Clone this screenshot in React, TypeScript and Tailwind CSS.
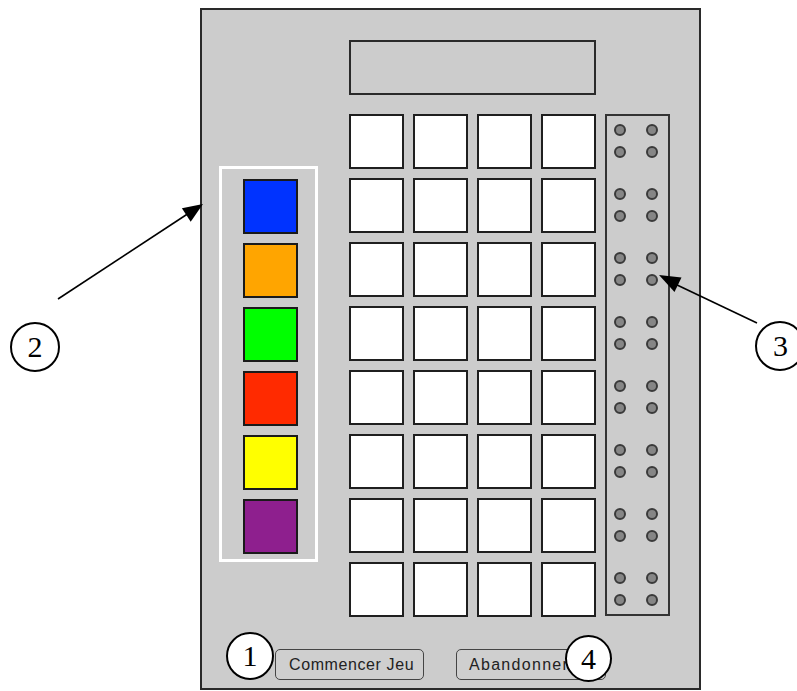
import React from "react";

const colors = ["#0033ff", "#ffa500", "#00ff00", "#ff2a00", "#ffff00", "#8e1f8e"];

function Callout({ n, className }: { n: string; className: string }) {
  return (
    <div
      className={`absolute rounded-full bg-white border-2 border-black flex items-center justify-center text-[30px] leading-none text-black ${className}`}
      style={{ fontFamily: '"Liberation Serif", "Times New Roman", serif' }}
    >
      {n}
    </div>
  );
}

export default function App() {
  return (
    <div className="relative w-[797px] h-[691px] bg-white overflow-hidden pt-[8px] pl-[200px]">
      <div className="w-[501px] h-[682px] border-2 border-[#2a2a2a] bg-[#cccccc] flex flex-col">
        {/* display box */}
        <div className="ml-[147px] mt-[30px] w-[247px] h-[55px] border-2 border-[#2a2a2a]" />
        <div className="flex items-start mt-[19px]">
          {/* palette */}
          <div className="ml-[17px] mt-[52px] w-[99px] h-[396px] border-[3px] border-white flex flex-col gap-[9px] pl-[21px] pt-[10px]">
            {colors.map((c) => (
              <div key={c} className="w-[55px] h-[55px] border-2 border-[#1a1a1a]" style={{ backgroundColor: c }} />
            ))}
          </div>
          {/* grid */}
          <div className="ml-[31px] grid grid-cols-4 gap-[9px]">
            {Array.from({ length: 32 }).map((_, i) => (
              <div key={i} className="w-[55px] h-[55px] bg-white border-2 border-[#1f1f1f]" />
            ))}
          </div>
          {/* pegs */}
          <div className="ml-[9px] w-[65px] h-[502px] border-2 border-[#333] flex flex-col pt-[8px] pl-[7px]">
            {Array.from({ length: 8 }).map((_, r) => (
              <div key={r} className="h-[64px] shrink-0">
                <div className="grid grid-cols-2 w-fit gap-x-[20px] gap-y-[10px]">
                  {Array.from({ length: 4 }).map((_, j) => (
                    <div key={j} className="w-[12px] h-[12px] rounded-full bg-[#868686] border-2 border-[#3a3a3a]" />
                  ))}
                </div>
              </div>
            ))}
          </div>
        </div>
        {/* buttons */}
        <div
          className="flex mt-[32px] text-[16px] text-[#222]"
          style={{ fontFamily: '"Liberation Sans", Arial, sans-serif' }}
        >
          <div className="ml-[73px] w-[149px] h-[31px] border-[1.5px] border-[#444] rounded-[5px] bg-[#cfcfcf] flex items-center pl-[13px] tracking-[0.6px]">
            Commencer Jeu
          </div>
          <div className="ml-[32px] w-[150px] h-[31px] border-[1.5px] border-[#444] rounded-[5px] bg-[#cfcfcf] flex items-center pl-[12px] tracking-[1.3px]">
            Abandonner
          </div>
        </div>
      </div>

      {/* arrows */}
      <svg className="absolute left-0 top-0 pointer-events-none" width="797" height="691">
        <line x1="58" y1="299" x2="189" y2="213" stroke="black" strokeWidth="1.6" />
        <polygon points="203,204 190.7,221.7 181.9,208.3" fill="black" />
        <line x1="757" y1="323" x2="675" y2="284" stroke="black" strokeWidth="1.6" />
        <polygon points="659,275 681.5,277.5 674.5,292" fill="black" />
      </svg>

      <Callout n="1" className="left-[226px] top-[632px] w-[48px] h-[48px]" />
      <Callout n="4" className="left-[565px] top-[635px] w-[47px] h-[47px]" />
      <Callout n="2" className="left-[10px] top-[322px] w-[50px] h-[50px]" />
      <Callout n="3" className="left-[755px] top-[321px] w-[50px] h-[50px] justify-start pl-[16px]" />
    </div>
  );
}
